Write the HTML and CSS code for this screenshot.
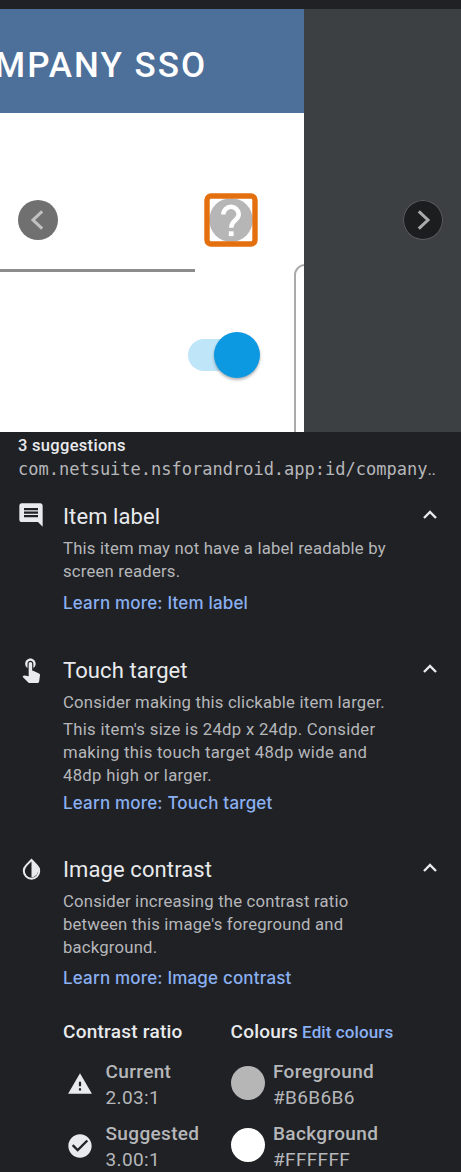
FILE: index.html
```html
<!DOCTYPE html>
<html lang="en-GB">
<head>
<meta charset="utf-8">
<title>Accessibility suggestions</title>
<link rel="stylesheet" href="styles.css">
</head>
<body>
<main class="page">
  <section class="preview">
    <div class="screen">
      <header class="app-bar"><span class="app-title">COMPANY SSO</span></header>
      <span class="field-line"></span>
      <span class="card-edge"></span>
      <span class="help"><svg viewBox="0 0 54 54" width="54" height="54"><circle cx="27" cy="27" r="21.8" fill="#b6b6b6"/><path d="M19.300 21.5a7.700 7.700 0 0 1 15.400 0c0 5.6-7.500 6-7.500 13.3" fill="none" stroke="#fff" stroke-width="4.500"/><rect x="24.800" y="38.300" width="4.800" height="4.800" fill="#fff"/><rect x="3" y="3" width="48" height="48" rx="4" fill="none" stroke="#e36f0e" stroke-width="5.400"/></svg></span>
      <span class="switch"><span class="thumb"></span></span>
    </div>
    <span class="nav prev"><svg viewBox="0 0 40 40" width="40" height="40"><path d="M24.2 11.3 15 20l9.200 8.700" fill="none" stroke="#c2c2c2" stroke-width="3"/></svg></span>
    <span class="nav next"><svg viewBox="0 0 40 40" width="40" height="40"><path d="M15.800 11.300 25 20l-9.200 8.700" fill="none" stroke="#aaabad" stroke-width="3"/></svg></span>
  </section>

  <section class="summary">
    <h1 class="count">3 suggestions</h1>
    <p class="resource">com.netsuite.nsforandroid.app:id/company<span class="dots">..</span></p>
  </section>

  <article class="item label-item">
    <svg class="icon" viewBox="0 0 24 24" width="28" height="28"><path fill="#e8eaed" d="M21.990 4c0-1.100-.89-2-1.990-2H4c-1.100 0-2 .9-2 2v12c0 1.100.9 2 2 2h14l4 4-.01-18zM18 14H6v-2h12v2zm0-3H6V9h12v2zm0-3H6V6h12v2z"/></svg>
    <div class="content">
      <h2 class="title">Item label</h2>
      <p class="text">This item may not have a label readable by<br>screen readers.</p>
      <a class="link">Learn more: Item label</a>
    </div>
    <svg class="caret" viewBox="0 0 16 12" width="16" height="12"><path d="m2 9 6-6 6 6" fill="none" stroke="#e8eaed" stroke-width="2.400"/></svg>
  </article>

  <article class="item touch-item">
    <svg class="icon" viewBox="0 0 24 24" width="28" height="28"><path fill="#e8eaed" d="M9 11.240V7.500C9 6.120 10.120 5 11.500 5S14 6.120 14 7.500v3.740c1.210-.81 2-2.180 2-3.740C16 5.010 13.990 3 11.500 3S7 5.010 7 7.500c0 1.560.79 2.930 2 3.740zm9.840 4.630l-4.540-2.260c-.17-.07-.35-.11-.54-.11H13v-6c0-.83-.67-1.500-1.500-1.500S10 6.670 10 7.500v10.740l-3.430-.72c-.08-.01-.15-.03-.24-.03-.31 0-.59.13-.79.33l-.79.8 4.940 4.940c.27.27.65.44 1.060.44h6.790c.75 0 1.330-.55 1.440-1.280l.75-5.270c.01-.07.02-.14.02-.2 0-.62-.38-1.160-.91-1.380z"/></svg>
    <div class="content">
      <h2 class="title">Touch target</h2>
      <p class="text">Consider making this clickable item larger.</p>
      <p class="text wide">This item's size is 24dp x 24dp. Consider<br>making this touch target 48dp wide and<br>48dp high or larger.</p>
      <a class="link">Learn more: Touch target</a>
    </div>
    <svg class="caret" viewBox="0 0 16 12" width="16" height="12"><path d="m2 9 6-6 6 6" fill="none" stroke="#e8eaed" stroke-width="2.400"/></svg>
  </article>

  <article class="item contrast-item">
    <svg class="icon" viewBox="0 0 28 28" width="28" height="28"><path d="m13.500 4-5.300 5.400a7.700 7.700 0 1 0 10.600 0z" fill="none" stroke="#e8eaed" stroke-width="2"/><path d="M13.500 3.500v17.900a7.700 7.700 0 0 0 5.500-12z" fill="#e8eaed"/></svg>
    <div class="content">
      <h2 class="title">Image contrast</h2>
      <p class="text">Consider increasing the contrast ratio<br>between this image's foreground and<br>background.</p>
      <a class="link">Learn more: Image contrast</a>
      <div class="details">
        <section class="ratios">
          <h3 class="heading">Contrast ratio</h3>
          <div class="row">
            <svg class="mark" viewBox="0 0 24 24" width="26" height="26"><path fill="#e8eaed" d="M1 21h22L12 2 1 21zm12-3h-2v-2h2v2zm0-4h-2v-4h2v4z"/></svg>
            <p><span class="name">Current</span><span class="value">2.03:1</span></p>
          </div>
          <div class="row">
            <svg class="mark" viewBox="0 0 24 24" width="28" height="28"><path fill="#e8eaed" d="M12 2C6.480 2 2 6.480 2 12s4.480 10 10 10 10-4.480 10-10S17.520 2 12 2zm-2 15l-5-5 1.410-1.410L10 14.170l7.590-7.590L19 8l-9 9z"/></svg>
            <p><span class="name">Suggested</span><span class="value">3.00:1</span></p>
          </div>
        </section>
        <section class="colours">
          <h3 class="heading">Colours <a class="edit">Edit colours</a></h3>
          <div class="row"><span class="swatch grey"></span><p><span class="name">Foreground</span><span class="value">#B6B6B6</span></p></div>
          <div class="row"><span class="swatch white"></span><p><span class="name">Background</span><span class="value">#FFFFFF</span></p></div>
        </section>
      </div>
    </div>
    <svg class="caret" viewBox="0 0 16 12" width="16" height="12"><path d="m2 9 6-6 6 6" fill="none" stroke="#e8eaed" stroke-width="2.400"/></svg>
  </article>
</main>
</body>
</html>
```
FILE: styles.css
```css
* { box-sizing: border-box; }
body { margin: 0; background: #202125; font-family: Roboto, sans-serif; color: #e8eaed; }
h1, h2, h3, p { margin: 0; font-weight: 400; }
svg { display: block; }
.page { width: 461px; height: 1172px; overflow: hidden; padding-top: 9px; white-space: nowrap; }
.preview { position: relative; height: 423px; background: #3d4043; overflow: hidden; }
.screen { position: relative; width: 304px; height: 423px; background: #fff; overflow: hidden; }
.app-bar { height: 104px; background: #4d709a; display: flex; justify-content: flex-end; align-items: center; padding: 9px 97px 0 0; }
.app-title { font-size: 35px; font-weight: 500; letter-spacing: 2px; color: #fff; }
.field-line { position: absolute; left: 0; top: 259.500px; width: 195px; height: 3px; background: #8c8c8c; }
.card-edge { position: absolute; left: 294px; top: 255px; width: 60px; height: 240px; border: 2px solid #aaa; border-radius: 11px; }
.help { position: absolute; left: 204px; top: 184px; }
.switch { position: absolute; left: 188px; top: 330px; width: 68px; height: 32px; border-radius: 16px; background: #bfe5f9; }
.thumb { position: absolute; left: 26px; top: -7px; width: 46px; height: 46px; border-radius: 50%; background: #0d98e2; box-shadow: 0 2px 3px rgba(0,0,0,.3); }
.nav { position: absolute; top: 191px; width: 40px; height: 40px; border-radius: 50%; }
.prev { left: 18px; background: #707070; }
.next { left: 403px; background: #1c1d1f; box-shadow: inset 0 0 0 1px #5b5d60; }
.summary { height: 71px; padding: 3px 0 0 18px; }
.count { font-size: 16.500px; font-weight: 500; line-height: 22px; letter-spacing: .3px; }
.resource { font-family: "DejaVu Sans Mono", monospace; font-size: 17px; line-height: 24px; color: #b6b7ba; }
.dots { font-family: Roboto, sans-serif; letter-spacing: -.5px; }
.item { display: grid; grid-template-columns: 45px 1fr 16px; padding: 0 23px 0 18px; }
.label-item { height: 153.500px; }
.touch-item { height: 199px; }
.title { font-size: 22px; line-height: 28px; margin-bottom: 6px; letter-spacing: .1px; }
.text { font-size: 16.700px; line-height: 23.300px; color: #b6b7ba; letter-spacing: .2px; }
.text + .text { margin-top: 4px; }
.wide { letter-spacing: .3px; }
.link { display: block; margin-top: 7px; font: 500 17px/24px Inter, sans-serif; color: #8ab0f2; letter-spacing: .18px; }
.touch-item .link { margin-top: 3px; }
.caret { margin-top: 6px; }
.label-item .icon { margin: -2px 0 0 -1px; }
.touch-item .icon { margin: -2px 0 0 -1px; }
.details { display: grid; grid-template-columns: 167.500px 1fr; margin-top: 29.500px; }
.heading { font-size: 19px; line-height: 24px; font-weight: 500; letter-spacing: .25px; margin-bottom: 15px; }
.edit { font-size: 17px; letter-spacing: .1px; margin-left: -1px; color: #8ab0f2; }
.row { height: 53px; margin-bottom: 9px; display: grid; grid-template-columns: 42.500px 1fr; align-items: center; color: #b6b7ba; font-size: 19px; line-height: 26.500px; letter-spacing: .35px; }
.mark { justify-self: center; margin: 0 9px 3px 0; }
.name, .value { display: block; }
.name { font-weight: 500; }
.swatch { width: 34px; height: 34px; border-radius: 50%; margin-bottom: 4px; }
.grey { background: #b6b6b6; }
.white { background: #fff; }
```
